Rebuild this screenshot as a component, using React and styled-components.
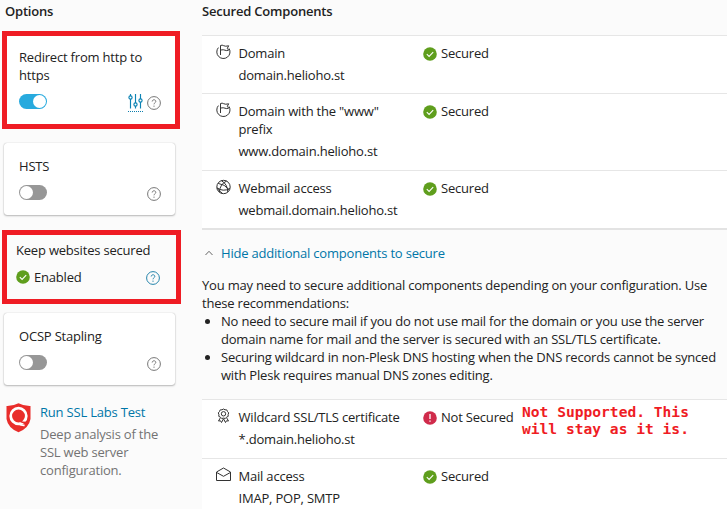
import React from 'react';
import styled, { createGlobalStyle } from 'styled-components';

const GlobalStyle = createGlobalStyle`
  * { box-sizing: border-box; }
  html, body { margin: 0; overflow: hidden; }
  body {
    background: #fbfbfb;
    color: #222;
    font: 13px/18px "Open Sans", sans-serif;
    letter-spacing: -0.2px;
  }
`;

const Page = styled.div`
  display: flex;
  width: 727px;
  height: 509px;
  overflow: hidden;
`;

const Sidebar = styled.aside`
  width: 202px;
  flex: none;
  padding: 2px 0 0 2px;
`;

const Main = styled.main`
  flex: 1;
  min-width: 0;
  padding-top: 2px;
`;

const Heading = styled.h2`
  margin: 0;
  height: 18px;
  font-size: 13px;
  line-height: 18px;
  font-weight: 600;
  padding-left: ${(p) => p.$indent || 0}px;
`;

const Highlight = styled.section`
  width: ${(p) => p.$width}px;
  height: ${(p) => p.$height}px;
  margin-top: ${(p) => p.$gap}px;
  padding: ${(p) => p.$padding};
  border: 5px solid #ef1c24;
  background: ${(p) => p.$fill};
`;

const Card = styled.section`
  width: 171px;
  height: 72px;
  margin: ${(p) => p.$gap}px 0 0 2px;
  padding: 14px 14px 0 15px;
  background: #fff;
  border-radius: 3px;
  box-shadow: 0 0 1px rgba(0, 0, 0, 0.3), 0 1px 2px rgba(0, 0, 0, 0.25);
`;

const CardTitle = styled.div`
  white-space: pre-line;
`;

const Controls = styled.div`
  display: flex;
  align-items: center;
  height: 20px;
  margin-top: ${(p) => p.$gap}px;
`;

const Track = styled.span`
  display: flex;
  justify-content: ${(p) => (p.$on ? 'flex-end' : 'flex-start')};
  width: 28px;
  height: 15px;
  padding: 1px;
  border-radius: 8px;
  background: ${(p) => (p.$on ? '#28aade' : '#979797')};
  margin: 0 auto 1px 0;
`;

const Knob = styled.span`
  width: 13px;
  height: 13px;
  border-radius: 50%;
  background: #fff;
`;

const SettingsLink = styled.span`
  width: 15px;
  height: 18px;
  margin: 1px 4px 0 0;
  border-bottom: 1px dotted #0d7fae;
  svg { display: block; }
`;

const HelpMark = styled.svg`
  display: block;
  flex: none;
  color: ${(p) => p.$tone};
  margin-top: ${(p) => p.$drop || 0}px;
`;

const StatusText = styled.span`
  display: flex;
  align-items: center;
  gap: 4px;
  margin-right: auto;
  white-space: nowrap;
  svg { flex: none; }
`;

const LabsRow = styled.div`
  display: flex;
  margin: 18px 0 0 4px;
  svg { flex: none; }
`;

const LabsCopy = styled.div`
  width: 130px;
  margin-left: 9px;
  color: #737373;
`;

const LabsLink = styled.a`
  display: block;
  margin-bottom: 4px;
  color: #0076a8;
`;

const Table = styled.div`
  background: #fff;
  margin-top: ${(p) => p.$gap}px;
  border-bottom: 2px solid #e3e3e3;
`;

const Row = styled.div`
  display: grid;
  grid-template-columns: 36.5px 184.5px 99px 1fr;
  border-top: 1px solid #e6e6e6;
  padding: 8px 0 ${(p) => (p.$tall ? 10 : 9)}px;
  & > svg { margin: 0 0 0 14px; }
`;

const Name = styled.div`
  width: ${(p) => (p.$narrow ? 150 : 180)}px;
`;

const Host = styled.div`
  margin-top: 4px;
`;

const State = styled(StatusText)`
  height: 18px;
  margin: 0;
  svg { margin-top: 1px; }
`;

const Note = styled.div`
  font: bold 14.6px/17px "DejaVu Sans Mono", monospace;
  letter-spacing: 0;
  color: #ef1c24;
  white-space: pre;
  margin-top: -5px;
`;

const Toggle = styled.a`
  display: flex;
  align-items: center;
  gap: 8px;
  height: 18px;
  margin: 14px 0 0 3px;
  color: #0076a8;
`;

const Advice = styled.div`
  margin-top: 14px;
  white-space: pre;
`;

const AdviceList = styled.ul`
  margin: 0;
  padding-left: 19px;
`;

const Help = ({ tone = '#777', drop }) => (
  <HelpMark $tone={tone} $drop={drop} width="14" height="14" viewBox="0 0 14 14" fill="none" stroke="currentColor">
    <circle cx="7" cy="7" r="6.4" />
    <path d="M5.2 5.5C5.2 3.2 8.8 3.2 8.8 5.4C8.8 6.8 7 6.8 7 8.3M7 9.6v1.2" />
  </HelpMark>
);

const Switch = ({ on }) => (
  <Track $on={on}><Knob /></Track>
);

const Sliders = () => (
  <svg width="15" height="15" viewBox="0 0 15 15" fill="none" stroke="#0d83b4" strokeWidth="1.15">
    <path d="M2.5 0v2M2.5 5v9.5M7.5 0v9M7.5 12v2.5M12.5 0v5M12.5 8v6.5" />
    <circle cx="2.5" cy="3.5" r="1.6" />
    <circle cx="7.5" cy="10.5" r="1.6" />
    <circle cx="12.5" cy="6.5" r="1.6" />
  </svg>
);

const Check = () => (
  <svg width="14" height="14" viewBox="0 0 14 14" fill="none">
    <circle cx="7" cy="7" r="6.8" fill="#5f9e1d" />
    <path d="M3.8 7.1l2.3 2.3 4.1-4.3" stroke="#fff" strokeWidth="1.1" />
  </svg>
);

const Alert = () => (
  <svg width="14" height="14" viewBox="0 0 14 14" fill="none">
    <circle cx="7" cy="7" r="6.8" fill="#d02b4b" />
    <path d="M7 3v5M7 9.5v1.3" stroke="#fff" strokeWidth="1.3" />
  </svg>
);

const iconProps = { width: 15, height: 16, viewBox: '0 0 15 16', fill: 'none', stroke: '#333' };

const FlagIcon = () => (
  <svg {...iconProps}>
    <path d="M2.4 3.6A6.6 6.6 0 1 0 13 4.4M4.5 11V1.5Q6.2.7 7.7 1.7T12.7 1.8L11.3 4.3 12.7 6.2Q10.5 7 9 6.2T4.8 6" />
  </svg>
);

const GlobeIcon = () => (
  <svg {...iconProps}>
    <circle cx="7.5" cy="8" r="6.7" />
    <path d="M5.5 1.8Q11.5 5 11.8 13M10.6 2.1Q4.2 4.7 3.3 13M1 8.8Q7 13.2 14 9.5M2.2 4.4Q8.5 5 13.4 11M1.2 9.3Q3 12 6.5 14.4" />
  </svg>
);

const AwardIcon = () => (
  <svg {...iconProps}>
    <path d="M7.5 1l1.5.8 1.8.1.7 1.6 1.2 1.4-.6 1.7.1 1.8-1.7.8-1.2 1.3-1.8-.4-1.8.4-1.2-1.3-1.7-.8.1-1.8-.6-1.7 1.2-1.4.7-1.6 1.8-.1z" />
    <circle cx="7.5" cy="5.8" r="2.2" />
    <path d="M4.4 9.8L2.5 13l2-.2 1 1.7 2-3.7 2 3.7 1-1.7 2 .2-1.9-3.2" />
  </svg>
);

const MailIcon = () => (
  <svg {...iconProps}>
    <path d="M.5 5L7.5 1l7 4v8.5H.5zM1 5.7l6.5 3.6L14 5.7" />
  </svg>
);

const Shield = () => (
  <svg width="25" height="30" viewBox="0 0 25 30">
    <path d="M.5 3Q7 3.2 12.5.3Q18 3.2 24.5 3v13Q23 25 12.5 29.3Q2 25 .5 16z" fill="#e92d2b" />
    <circle cx="12.5" cy="13" r="7.8" fill="none" stroke="#fff" strokeWidth="2.7" />
    <path d="M13.5 17.8Q16 19.8 21.5 19.6" fill="none" stroke="#e92d2b" strokeWidth="1.7" />
    <path d="M12.5 20.8Q15 22.6 18.6 22.4" fill="none" stroke="#fff" strokeWidth="1.8" />
  </svg>
);

const Component = ({ icon, name, host, narrow, tall, failed, note }) => (
  <Row $tall={tall}>
    {icon}
    <Name $narrow={narrow}>
      {name}
      <Host>{host}</Host>
    </Name>
    <State>
      {failed ? <Alert /> : <Check />}
      {failed ? 'Not Secured' : 'Secured'}
    </State>
    {note && <Note>{note}</Note>}
  </Row>
);

export default function App() {
  return (
    <>
      <GlobalStyle />
      <Page>
        <Sidebar>
          <Heading $indent={3}>Options</Heading>
          <Highlight $width={178} $height={98} $gap={11} $padding="12px 14px 0 12px" $fill="#fff">
            <CardTitle>{'Redirect from http to\nhttps'}</CardTitle>
            <Controls $gap={8}>
              <Switch on />
              <SettingsLink><Sliders /></SettingsLink>
              <Help drop={2} />
            </Controls>
          </Highlight>
          <Card $gap={14}>
            <CardTitle>HSTS</CardTitle>
            <Controls $gap={8}><Switch /><Help drop={1} /></Controls>
          </Card>
          <Highlight $width={179} $height={74} $gap={15} $padding="6px 16px 0 9px" $fill="transparent">
            <CardTitle>Keep websites secured</CardTitle>
            <Controls $gap={8}>
              <StatusText><Check />Enabled</StatusText>
              <Help tone="#2584ab" drop={1} />
            </Controls>
          </Highlight>
          <Card $gap={9}>
            <CardTitle>OCSP Stapling</CardTitle>
            <Controls $gap={8}><Switch /><Help drop={1} /></Controls>
          </Card>
          <LabsRow>
            <Shield />
            <LabsCopy>
              <LabsLink>Run SSL Labs Test</LabsLink>
              Deep analysis of the SSL web server configuration.
            </LabsCopy>
          </LabsRow>
        </Sidebar>
        <Main>
          <Heading>Secured Components</Heading>
          <Table $gap={15}>
            <Component icon={<FlagIcon />} name="Domain" host="domain.helioho.st" />
            <Component icon={<FlagIcon />} name={'Domain with the "www" prefix'} host="www.domain.helioho.st" narrow tall />
            <Component icon={<GlobeIcon />} name="Webmail access" host="webmail.domain.helioho.st" />
          </Table>
          <Toggle>
            <svg width="8" height="6" viewBox="0 0 8 6" fill="none" stroke="#666"><path d="M.5 5L4 1.3 7.5 5" /></svg>
            Hide additional components to secure
          </Toggle>
          <Advice>
            {'You may need to secure additional components depending on your configuration. Use\nthese recommendations:'}
            <AdviceList>
              <li>{'No need to secure mail if you do not use mail for the domain or you use the server\ndomain name for mail and the server is secured with an SSL/TLS certificate.'}</li>
              <li>{'Securing wildcard in non-Plesk DNS hosting when the DNS records cannot be synced\nwith Plesk requires manual DNS zones editing.'}</li>
            </AdviceList>
          </Advice>
          <Table $gap={15}>
            <Component
              icon={<AwardIcon />}
              name="Wildcard SSL/TLS certificate"
              host="*.domain.helioho.st"
              tall
              failed
              note={'Not Supported. This\nwill stay as it is.'}
            />
            <Component icon={<MailIcon />} name="Mail access" host="IMAP, POP, SMTP" />
          </Table>
        </Main>
      </Page>
    </>
  );
}
